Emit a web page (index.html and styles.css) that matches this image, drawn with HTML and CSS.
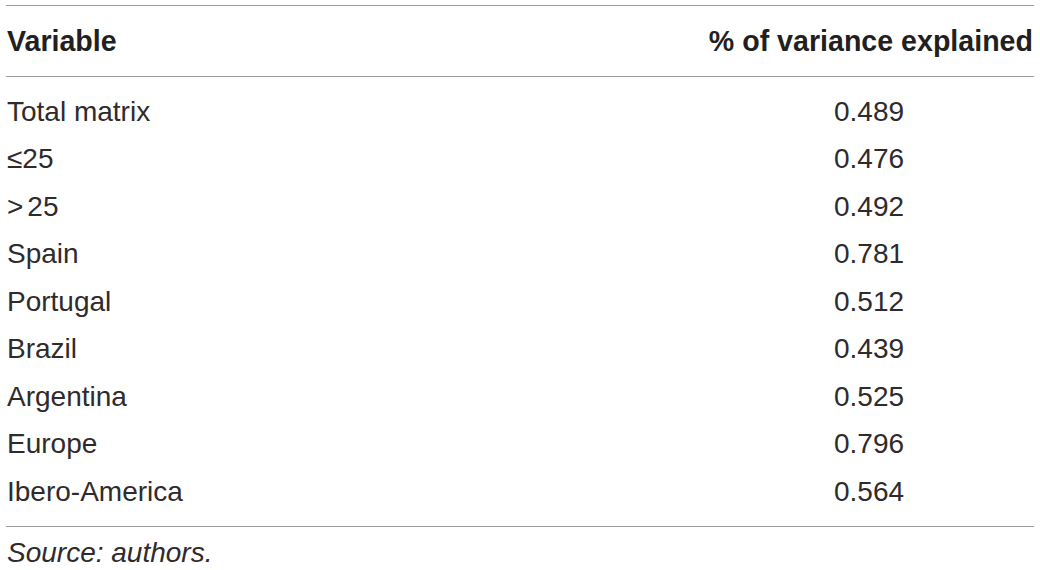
FILE: index.html
```html
<!DOCTYPE html>
<html lang="en">
<head>
<meta charset="utf-8">
<title>Variance explained</title>
<link rel="stylesheet" href="styles.css">
</head>
<body>
<div class="table">
  <div class="head row">
    <div class="cell var">Variable</div>
    <div class="cell val">% of variance explained</div>
  </div>
  <div class="body">
    <div class="row"><div class="cell var">Total matrix</div><div class="cell num">0.489</div></div>
    <div class="row"><div class="cell var">&le;25</div><div class="cell num">0.476</div></div>
    <div class="row"><div class="cell var">&gt;<span class="gap"></span>25</div><div class="cell num">0.492</div></div>
    <div class="row"><div class="cell var">Spain</div><div class="cell num">0.781</div></div>
    <div class="row"><div class="cell var">Portugal</div><div class="cell num">0.512</div></div>
    <div class="row"><div class="cell var">Brazil</div><div class="cell num">0.439</div></div>
    <div class="row"><div class="cell var">Argentina</div><div class="cell num">0.525</div></div>
    <div class="row"><div class="cell var">Europe</div><div class="cell num">0.796</div></div>
    <div class="row"><div class="cell var">Ibero-America</div><div class="cell num">0.564</div></div>
  </div>
  <div class="source">Source: authors.</div>
</div>
</body>
</html>
```

FILE: styles.css
```css
html, body {
  margin: 0;
  padding: 0;
  background: #ffffff;
}

body {
  font-family: "Liberation Sans", Arial, Helvetica, sans-serif;
  color: #2f2b2c;
}

.table {
  margin: 5px 6px 0 6px;
  width: 1028px;
}

.row {
  display: grid;
  grid-template-columns: 1fr 330px;
  align-items: center;
  height: 47.5px;
  font-size: 28px;
}

.head {
  height: 70px;
  border-top: 1px solid #9c9c9c;
  border-bottom: 1px solid #9c9c9c;
  font-weight: bold;
  font-size: 28.6px;
  color: #231f20;
}

.cell {
  white-space: nowrap;
  line-height: 1;
}

.var {
  padding-left: 1px;
}

.gap {
  display: inline-block;
  width: 4px;
}

.val {
  text-align: right;
  padding-right: 1px;
}

.num {
  text-align: center;
}

.body {
  padding: 11px 0 10.5px 0;
  border-bottom: 1px solid #9c9c9c;
}

.source {
  font-style: italic;
  font-size: 28px;
  line-height: 1;
  padding: 12px 0 0 1px;
}
```
